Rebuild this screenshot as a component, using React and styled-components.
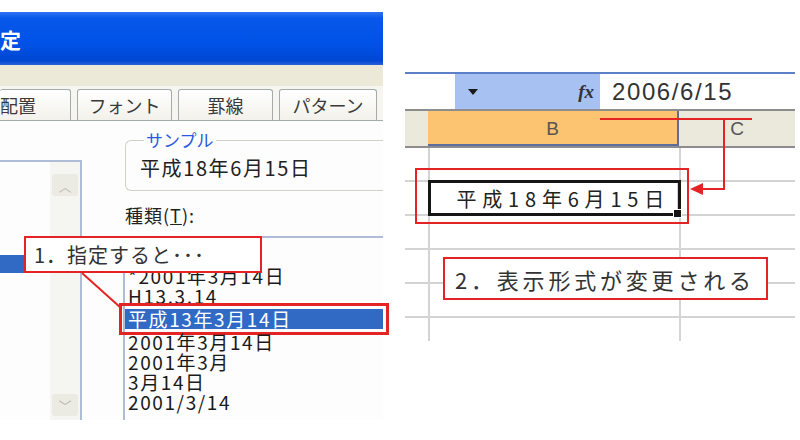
import React from 'react'
import styled, { createGlobalStyle } from 'styled-components'

const GlobalStyle = createGlobalStyle`
  html, body { margin: 0; padding: 0; background: #fff; }
  body { font-family: "Noto Sans CJK JP", "Liberation Sans", sans-serif; }
`

const Page = styled.div`
  position: relative;
  width: 800px;
  height: 440px;
  overflow: hidden;
  display: flex;
  align-items: flex-start;
  background: #fff;
`

// ---------- left: format dialog ----------
const Dialog = styled.div`
  margin-top: 12px;
  width: 383px;
  height: 408px;
  display: flex;
  flex-direction: column;
  background: #fdfdfd;
`

const TitleBar = styled.div`
  height: 53px;
  flex-shrink: 0;
  background: linear-gradient(#2f72f2 0%, #0758ea 12%, #0052e6 60%, #0047d2 92%, #2a62d8 100%);
  color: #fff;
  font-weight: bold;
  font-size: 21px;
  display: flex;
  align-items: center;
`

const Strip = styled.div`
  height: 21px;
  flex-shrink: 0;
  background: #ece9d8;
`

const TabRow = styled.div`
  height: 34px;
  flex-shrink: 0;
  display: flex;
  align-items: flex-end;
  gap: 6px;
  background: #f6f5f0;
  border-bottom: 1px solid #a3abad;
`

const Tab = styled.div`
  width: ${(p) => p.$w}px;
  height: 31px;
  box-sizing: border-box;
  border: 1px solid #a3abad;
  border-left: ${(p) => (p.$cut ? 'none' : '1px solid #a3abad')};
  border-bottom: none;
  border-radius: 3px 3px 0 0;
  background: linear-gradient(#ffffff, #f2f1ea);
  display: flex;
  align-items: center;
  justify-content: ${(p) => (p.$cut ? 'flex-start' : 'center')};
  font-size: 18px;
  color: #3a3a3a;
`

const Body = styled.div`
  flex: 1;
  display: flex;
`

const SideList = styled.div`
  width: 80px;
  margin-top: 39px;
  border-top: 2px solid #aebcd8;
  border-right: 2px solid #aebcd8;
  display: flex;
`

const SideRows = styled.div`
  flex: 1;
  padding-top: 93px;
`

const SideSelected = styled.div`
  width: 25px;
  height: 18px;
  background: #316ac5;
`

const ScrollTrack = styled.div`
  width: 30px;
  background: #f5f5f1;
  display: flex;
  flex-direction: column;
  justify-content: space-between;
  padding: 12px 0 4px;
`

const ScrollBtn = styled.div`
  height: 22px;
  margin: 0 2px;
  border-radius: 3px;
  background: #ecebe3;
  color: #b8b8b0;
  font-size: 13px;
  display: flex;
  align-items: center;
  justify-content: center;
`

const MainCol = styled.div`
  flex: 1;
  margin-left: 41px;
  display: flex;
  flex-direction: column;
`

const SampleGroup = styled.fieldset`
  margin: 9px 0 0 2px;
  padding: 6px 0 0 14px;
  height: 61px;
  box-sizing: border-box;
  border: 1px solid #d2d1c6;
  border-right: none;
  border-radius: 6px 0 0 6px;
  font-size: 20px;
  line-height: 24px;
  color: #222;
  letter-spacing: 1.6px;
`

const SampleLegend = styled.legend`
  margin-left: 4px;
  padding: 0 2px;
  font-size: 17px;
  color: #2a58e0;
  line-height: 20px;
  letter-spacing: 0;
`

const KindLabel = styled.div`
  margin-top: 14px;
  font-size: 18px;
  letter-spacing: 1px;
  color: #222;
  line-height: 20px;
  padding-left: 2px;
  u { text-decoration: underline; }
`

const TypeList = styled.div`
  margin-top: 11px;
  flex: 1;
  border-top: 2px solid #aebcd8;
  border-left: 2px solid #aebcd8;
  padding-top: 28px;
  display: flex;
  flex-direction: column;
`

const TypeItem = styled.div`
  height: 20px;
  line-height: 20px;
  padding-left: 3px;
  font-size: 19px;
  letter-spacing: 1.6px;
  white-space: nowrap;
  color: ${(p) => (p.$selected ? '#fff' : '#1a1a1a')};
  background: ${(p) => (p.$selected ? '#316ac5' : 'transparent')};
  outline: ${(p) => (p.$selected ? '3px solid #e42424' : 'none')};
  outline-offset: 3px;
  margin: ${(p) => (p.$selected ? '3px 0' : '0')};
`

// ---------- right: worksheet ----------
const Sheet = styled.div`
  margin-left: 22px;
  margin-top: 72px;
  width: 390px;
  display: flex;
  flex-direction: column;
`

const FormulaBar = styled.div`
  height: 35px;
  border-top: 2px solid #5b80c9;
  display: flex;
`

const NameBox = styled.div`
  width: 50px;
  background: #fff;
`

const FxArea = styled.div`
  width: 145px;
  background: #a6c1f2;
  display: flex;
  align-items: center;
  justify-content: space-between;
  padding: 0 6px 0 12px;
  box-sizing: border-box;
`

const FxLabel = styled.span`
  font-family: "Liberation Serif", serif;
  font-style: italic;
  font-weight: bold;
  font-size: 19px;
  color: #333;
`

const FormulaValue = styled.div`
  padding-left: 12px;
  display: flex;
  align-items: center;
  font-family: "Liberation Sans", sans-serif;
  font-size: 24px;
  letter-spacing: 1.6px;
  color: #333;
`

const HeaderRow = styled.div`
  height: 35px;
  border-top: 2px solid #8d8d8d;
  border-bottom: 2px solid #8d8d8d;
  display: flex;
`

const HeaderCell = styled.div`
  width: ${(p) => (p.$w ? `${p.$w}px` : 'auto')};
  flex: ${(p) => (p.$w ? 'none' : 1)};
  background: ${(p) => (p.$active ? '#fcc370' : '#ebe8dc')};
  border-right: ${(p) => (p.$active ? '2px solid #5f6d9c' : 'none')};
  box-shadow: ${(p) => (p.$active ? 'inset 0 -2px 0 #5f6d9c' : 'none')};
  display: flex;
  align-items: center;
  justify-content: center;
  font-family: "Liberation Sans", sans-serif;
  font-size: 19px;
  color: #555;
`

const GridRow = styled.div`
  height: ${(p) => (p.$last ? 23 : 32)}px;
  border-bottom: ${(p) => (p.$last ? 'none' : '2px solid #d4d4d4')};
  display: flex;
`

const Cell = styled.div`
  width: ${(p) => (p.$w ? `${p.$w}px` : 'auto')};
  flex: ${(p) => (p.$w ? 'none' : 1)};
  border-right: ${(p) => (p.$w ? '2px solid #d4d4d4' : 'none')};
`

const ActiveCell = styled.div`
  position: relative;
  width: 249px;
  border-right: 2px solid #d4d4d4;
  outline: 3px solid #151515;
  outline-offset: -1px;
  display: flex;
  align-items: center;
  justify-content: flex-end;
  padding-right: 7px;
  box-sizing: border-box;
  font-size: 20px;
  letter-spacing: 5.8px;
  color: #222;
`

const FillHandle = styled.div`
  position: absolute;
  right: -5px;
  bottom: -4px;
  width: 7px;
  height: 7px;
  background: #151515;
  border: 1px solid #fff;
`

const RedFrame = styled.div`
  position: absolute;
  left: -15px;
  right: -12px;
  top: -14px;
  bottom: -10px;
  border: 2px solid #e42424;
  pointer-events: none;
`

// ---------- callouts ----------
const Callout = styled.div`
  position: absolute;
  left: ${(p) => p.$x}px;
  top: ${(p) => p.$y}px;
  width: ${(p) => p.$w}px;
  height: ${(p) => p.$h}px;
  box-sizing: border-box;
  border: 2px solid #e42424;
  background: #fff;
  display: flex;
  align-items: center;
  padding-left: ${(p) => p.$pad}px;
  font-size: ${(p) => p.$fs}px;
  letter-spacing: ${(p) => p.$ls}px;
  color: #333;
  white-space: nowrap;
`

const Connectors = styled.svg`
  position: absolute;
  left: 0;
  top: 0;
  pointer-events: none;
`

const types = [
  '*2001年3月14日',
  'H13.3.14',
  '平成13年3月14日',
  '2001年3月14日',
  '2001年3月',
  '3月14日',
  '2001/3/14',
]

export default function App() {
  return (
    <Page>
      <GlobalStyle />
      <Dialog>
        <TitleBar>定</TitleBar>
        <Strip />
        <TabRow>
          <Tab $w={71} $cut>配置</Tab>
          <Tab $w={95}>フォント</Tab>
          <Tab $w={95}>罫線</Tab>
          <Tab $w={98}>パターン</Tab>
        </TabRow>
        <Body>
          <SideList>
            <SideRows>
              <SideSelected />
            </SideRows>
            <ScrollTrack>
              <ScrollBtn>︿</ScrollBtn>
              <ScrollBtn>﹀</ScrollBtn>
            </ScrollTrack>
          </SideList>
          <MainCol>
            <SampleGroup>
              <SampleLegend>サンプル</SampleLegend>
              平成18年6月15日
            </SampleGroup>
            <KindLabel>
              種類(<u>T</u>):
            </KindLabel>
            <TypeList>
              {types.map((t, i) => (
                <TypeItem key={i} $selected={i === 2}>
                  {t}
                </TypeItem>
              ))}
            </TypeList>
          </MainCol>
        </Body>
      </Dialog>

      <Sheet>
        <FormulaBar>
          <NameBox />
          <FxArea>
            <svg width="12" height="8" viewBox="0 0 12 8">
              <path d="M1 1h10L6 7z" fill="#1a1a1a" />
            </svg>
            <FxLabel>fx</FxLabel>
          </FxArea>
          <FormulaValue>2006/6/15</FormulaValue>
        </FormulaBar>
        <HeaderRow>
          <HeaderCell $w={23} />
          <HeaderCell $w={249} $active>B</HeaderCell>
          <HeaderCell>C</HeaderCell>
        </HeaderRow>
        {[0, 1, 2, 3, 4, 5].map((r) => (
          <GridRow key={r} $last={r === 5}>
            <Cell $w={23} />
            {r === 1 ? (
              <ActiveCell>
                平成18年6月15日
                <FillHandle />
                <RedFrame />
              </ActiveCell>
            ) : (
              <Cell $w={249} />
            )}
            <Cell />
          </GridRow>
        ))}
      </Sheet>

      <Callout $x={24} $y={236} $w={238} $h={37} $pad={8} $fs={20} $ls={1}>
        1．指定すると･･･
      </Callout>
      <Callout $x={443} $y={257} $w={325} $h={43} $pad={10} $fs={22} $ls={3.8}>
        2．表示形式が変更される
      </Callout>

      <Connectors width="800" height="440" viewBox="0 0 800 440">
        <g stroke="#e42424" strokeWidth="2" fill="none">
          <line x1="82" y1="273" x2="121" y2="308" />
          <line x1="600" y1="119" x2="752" y2="119" />
          <polyline points="724,119 724,189 700,189" />
        </g>
        <path d="M690 189 L703 183 L703 195 Z" fill="#e42424" />
      </Connectors>
    </Page>
  )
}
